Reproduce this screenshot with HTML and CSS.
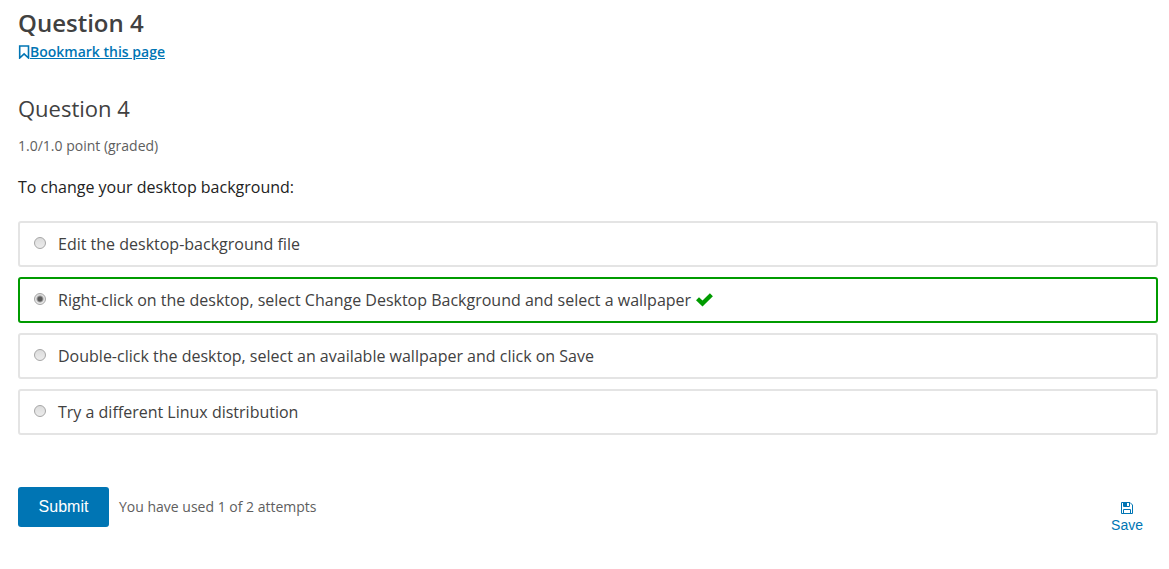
FILE: index.html
```html
<!DOCTYPE html>
<html lang="en">
<head>
<meta charset="utf-8">
<title>Question 4</title>
<link rel="stylesheet" href="styles.css">
</head>
<body>
<main class="unit">
  <h1 class="unit-title">Question 4</h1>
  <a class="bookmark" href="#"><svg class="bookmark-icon" viewBox="0 0 12 14" aria-hidden="true"><path d="M1.700 1h8.800v12l-4.400-4.200-4.400 4.200z"/></svg>Bookmark this page</a>
  <form class="problem">
    <h2 class="problem-title">Question 4</h2>
    <p class="progress">1.0/1.0 point (graded)</p>
    <fieldset class="choices">
      <legend class="prompt">To change your desktop background:</legend>
      <label class="choice"><input class="radio" type="radio" name="answer"><span>Edit the desktop-background file</span></label>
      <label class="choice correct"><input class="radio" type="radio" name="answer" checked><span>Right-click on the desktop, select Change Desktop Background and select a wallpaper</span><svg class="check" viewBox="0 0 17 14" role="img" aria-label="correct"><path d="M0 7.200 3 4.300 6.500 7.600 13.900.3 16.900 3.200 6.500 13.400z"/></svg></label>
      <label class="choice"><input class="radio" type="radio" name="answer"><span>Double-click the desktop, select an available wallpaper and click on Save</span></label>
      <label class="choice"><input class="radio" type="radio" name="answer"><span>Try a different Linux distribution</span></label>
    </fieldset>
    <div class="actions">
      <button class="submit" type="button">Submit</button>
      <span class="attempts">You have used 1 of 2 attempts</span>
      <button class="save" type="button"><svg class="save-icon" viewBox="0 0 12 12" aria-hidden="true"><path d="M.5.5h8.500l2.500 2.500v8.500h-11zM2.500.5v4h6v-4M2.500 11.500v-4h7v4"/><path class="save-shutter" d="M3 1h3v3h-3z"/></svg><span>Save</span></button>
    </div>
  </form>
</main>
</body>
</html>
```
FILE: styles.css
```css
* { box-sizing: border-box; }
body { margin: 0; background: #fff; color: #313131; font-family: "Open Sans", sans-serif; }
.unit { padding: 7px 11px 24px 18px; }
.unit-title { margin: 0; font-size: 24px; line-height: 32px; font-weight: 600; color: #414141; }
.bookmark { display: inline-flex; align-items: center; margin-top: 1px; font-size: 14px; line-height: 24px; font-weight: 600; color: #0075b4; text-decoration: underline; }
.bookmark-icon { width: 12px; height: 14px; fill: none; stroke: currentColor; stroke-width: 1.6; }
.problem { padding-top: 28px; }
.problem-title { margin: 0; font-size: 22px; line-height: 32px; font-weight: 400; color: #414141; }
.progress { margin: 12px 0 0; font-size: 14px; line-height: 20px; color: #5e5e5e; }
.choices { margin: 18px 0 0; padding: 0; border: 0; min-width: 0; }
.prompt { padding: 0; margin-bottom: 21px; font-size: 16px; line-height: 26px; color: #222; }
.choice { display: flex; align-items: center; min-height: 46px; margin-bottom: 10px; padding: 0 14px; border: 2px solid #e4e4e4; border-radius: 3px; font-size: 16px; line-height: 24px; color: #414141; }
.correct { border-color: #009b00; }
.radio { appearance: none; flex: none; width: 12px; height: 12px; margin: 0 12px 2px 0; border: 1px solid #a6a6a6; border-radius: 50%; background: linear-gradient(#dcdcdc, #ececec); }
.radio:checked { background: radial-gradient(circle, #5a5a5a 2px, transparent 4px), linear-gradient(#dcdcdc, #ececec); }
.check { flex: none; width: 17px; height: 14px; margin-left: 5px; fill: #009b00; }
.actions { display: flex; align-items: flex-start; padding: 42px 15px 0 0; }
.submit { width: 91px; height: 40px; border: 0; border-radius: 3px; background: #0075b4; color: #fff; font: 16px "Liberation Sans", Arial, sans-serif; }
.attempts { margin-left: 10px; font-size: 14px; line-height: 40px; color: #5e5e5e; }
.save { display: flex; flex-direction: column; align-items: center; margin-left: auto; padding: 15px 0 0; border: 0; background: none; color: #0075b4; font: 14px/22px "Liberation Sans", Arial, sans-serif; }
.save-icon { width: 12px; height: 12px; fill: none; stroke: currentColor; }
.save-shutter { fill: currentColor; stroke: none; }
```
